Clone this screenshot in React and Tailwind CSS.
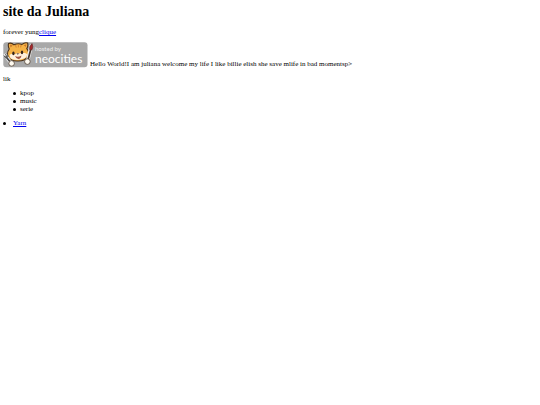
import React from 'react';

const likes = ['kpop', 'music', 'serie'];

function NeocitiesBadge() {
    return (
        <svg
            viewBox="0 0 85 26"
            className="w-[85px] h-[26px] shrink-0"
            role="img"
            aria-label="Hosted by Neocities"
        >
            <rect x="0.3" y="0.3" width="84.2" height="25" rx="3" fill="#a8a8a8" />

            {/* cat */}
            <path
                d="M5.6 1.4 Q8.5 0.4 11 2.8 Q15 0.8 19 2.4 Q21.8 0 24.6 1 Q25.4 4 23.8 6.6 Q27.2 10.8 25 14.6 Q21.5 19.4 14.5 19 Q7 19.2 4.8 14.2 Q3.8 10.4 6.2 7 Q4.8 4 5.6 1.4 Z"
                fill="#f5b347"
                stroke="#4a3018"
                strokeWidth="1.1"
            />
            <path d="M6.8 2.6 L7.6 5.6 L9.8 3.6 Z M23.4 2.2 L23 5 L20.6 3.2 Z" fill="#c9782c" />
            <path d="M12.6 3 L13.2 5.6 M15.4 2.4 V5.4 M18.2 3 L17.6 5.4" stroke="#d07d2c" strokeWidth="0.9" />
            <path d="M6.4 13 Q9 11 12.4 12.2 Q14.2 10 16.6 11.6 Q20.5 9.8 24 12 Q24.4 14.8 21 16.6 Q15 19 9.2 17.2 Q6.8 16 6.4 13 Z" fill="#fff1dc" />
            <ellipse cx="10.4" cy="11.4" rx="1.2" ry="1.8" fill="#33231a" />
            <ellipse cx="19" cy="10.4" rx="1.2" ry="1.8" fill="#33231a" />
            <path d="M13.4 11.6 L16 11.3 L14.9 12.8 Z" fill="#4b2a1f" />
            <path d="M12 14 Q15 15.6 18.4 13.4 Q18 16.8 15.4 17 Q13 16.8 12 14 Z" fill="#a05442" />

            {/* fork */}
            <path d="M2.2 13.4 L8 21" stroke="#eee" strokeWidth="3.6" strokeLinecap="round" />
            <path d="M3 14.8 L8 21" stroke="#444" strokeWidth="1.7" strokeLinecap="round" />
            <path d="M0.8 13.4 L2.6 16 L5.2 14.4 L4 11.6 M2.4 12.2 L4 14.8" stroke="#555" strokeWidth="1" fill="none" />

            {/* brush */}
            <path d="M28.2 4 L25 17" stroke="#eee" strokeWidth="3.6" strokeLinecap="round" />
            <path d="M27.6 8 L25 18" stroke="#44362e" strokeWidth="1.7" strokeLinecap="round" />
            <path d="M26.6 7.6 Q26 4.4 29 1.6 Q30.8 5 28.8 8 Z" fill="#a8282c" stroke="#57201f" strokeWidth="0.6" />

            {/* paws */}
            <circle cx="8.6" cy="21.4" r="2.8" fill="#fffaf0" stroke="#4f4034" strokeWidth="0.8" />
            <circle cx="24.4" cy="19.6" r="2.8" fill="#fffaf0" stroke="#4f4034" strokeWidth="0.8" />

            <text x="32" y="9" fontSize="6" fill="#f0f0f0" fontFamily="Lato, sans-serif">
                hosted by
            </text>
            <text x="32" y="21" fontSize="12" fill="#fff" fontFamily="Lato, sans-serif">
                neocities
            </text>
        </svg>
    );
}

export default function App() {
    return (
        <main className="px-[3px] pt-1 bg-white text-black font-['Liberation_Serif',serif] text-[7px] leading-[8px]">
            <h1 className="text-[14px] leading-4 font-bold">site da Juliana</h1>
            <p className="mt-2">
                forever yung
                <a href="#clique" className="text-[#0000ee] underline">clique</a>
            </p>
            <div className="mt-[6px] flex items-end gap-[2px]">
                <a href="#neocities">
                    <NeocitiesBadge />
                </a>
                <p>Hello World!I am juliana welcome my life I like billie elish she save mlife in bad momentsp&gt;</p>
            </div>
            <p className="mt-[7px]">lik</p>
            <ul className="mt-[6px] pl-[10px]">
                {likes.map((item) => (
                    <li key={item} className="flex items-center gap-[4px] before:size-[3px] before:rounded-full before:bg-black">
                        {item}
                    </li>
                ))}
            </ul>
            <ul className="mt-[6px]">
                <li className="flex items-center gap-[7px] before:size-[3px] before:rounded-full before:bg-black">
                    <a href="#yarn" className="text-[#0000ee] underline">Yarn</a>
                </li>
            </ul>
        </main>
    );
}
